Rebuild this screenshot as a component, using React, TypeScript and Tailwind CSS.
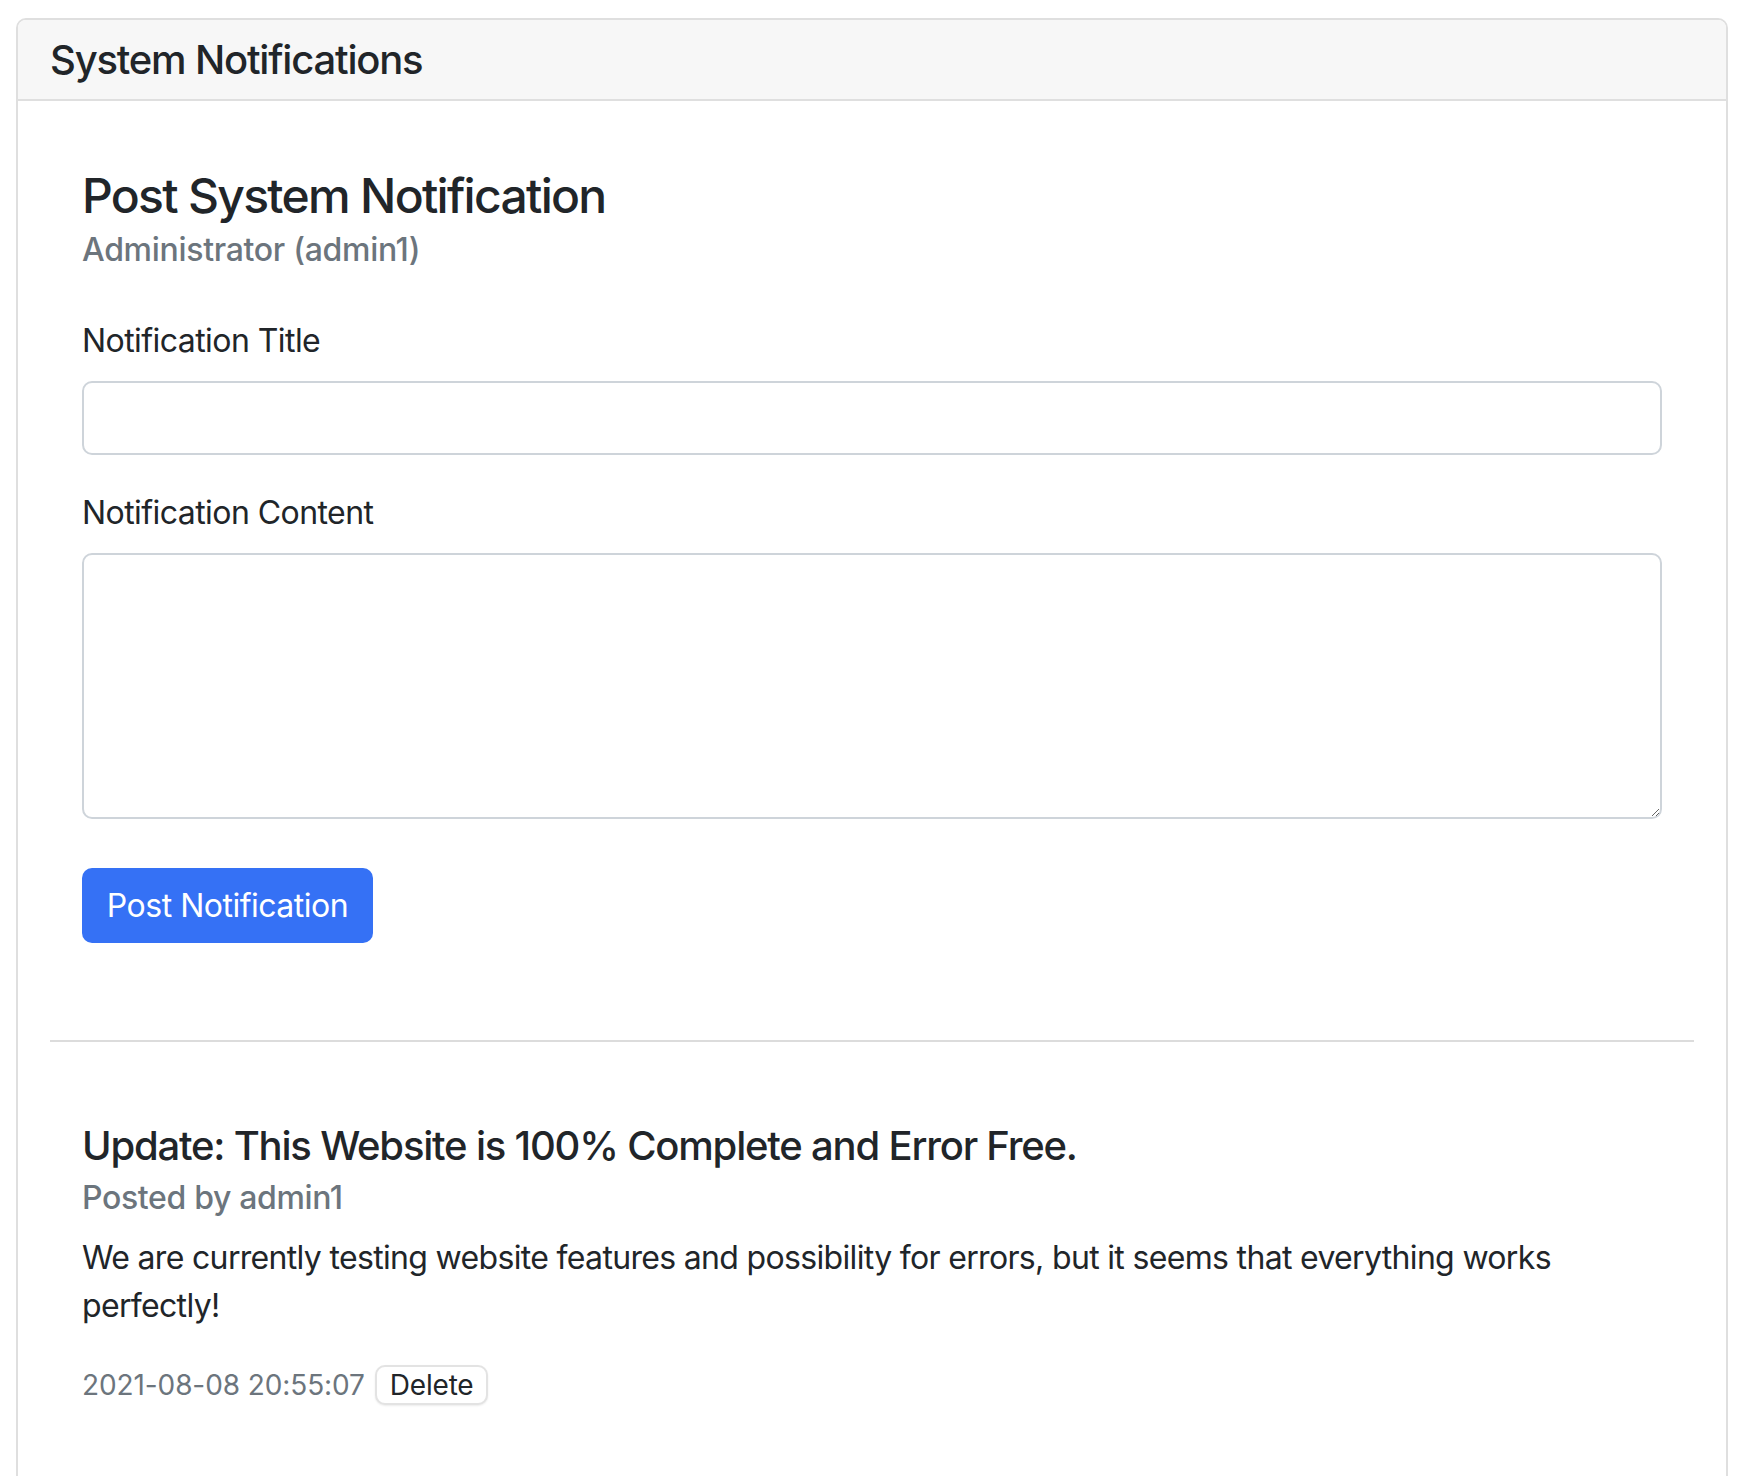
import React from "react";

export default function App() {
  return (
    <div
      className="min-h-screen bg-white pl-[16px] pt-[18px] text-[#212529]"
      style={{ fontFamily: "Inter, 'Noto Sans', 'Liberation Sans', sans-serif" }}
    >
      <div className="w-[1712px] min-h-[1520px] overflow-hidden rounded-[10px] border-2 border-[#dfdfdf] bg-white">
        <div className="h-[81px] border-b-2 border-[#dfdfdf] bg-[#f7f7f7] px-[32px] py-[16px]">
          <h5 className="text-[40px] font-medium leading-[48px] tracking-[-1.2px]">System Notifications</h5>
        </div>
        <div className="px-[32px] pt-[32px]">
          <div className="px-[32px] pt-[34px]">
            <h4 className="text-[48px] font-medium leading-[57.6px] tracking-[-1.7px]">Post System Notification</h4>
            <h6 className="mt-[6px] text-[32px] font-medium leading-[38.4px] tracking-[-0.3px] text-[#6c757d]">
              Administrator (admin1)
            </h6>
            <label className="mt-[48px] block text-[32px] leading-[48px] tracking-[-0.56px]">Notification Title</label>
            <input
              type="text"
              className="mt-[16px] block h-[74px] w-full rounded-[10px] border-2 border-[#ced4da] bg-white px-[24px] text-[32px] outline-none"
            />
            <label className="mt-[34px] block text-[32px] leading-[48px] tracking-[-0.56px]">Notification Content</label>
            <textarea className="mt-[16px] block h-[266px] w-full rounded-[10px] border-2 border-[#ced4da] bg-white px-[24px] py-[12px] text-[32px] outline-none" />
            <button className="mt-[49px] block h-[75px] w-[291px] rounded-[10px] bg-[#3571f5] text-[32px] leading-[48px] tracking-[-0.5px] text-white">
              Post Notification
            </button>
          </div>
          <hr className="mt-[97px] border-0 border-t-2 border-[#dcdcdc]" />
          <div className="px-[32px] pt-[80px]">
            <h5 className="text-[40px] font-medium leading-[48px] tracking-[-1.2px]">
              Update: This Website is 100% Complete and Error Free.
            </h5>
            <h6 className="mt-[9px] text-[32px] font-medium leading-[38.4px] tracking-[-0.35px] text-[#6c757d]">
              Posted by admin1
            </h6>
            <p className="mt-[17px] text-[32px] leading-[48px] tracking-[-0.67px]">
              We are currently testing website features and possibility for errors, but it seems that everything works perfectly!
            </p>
            <div className="mt-[35px] flex items-center gap-[10px]">
              <span className="text-[28px] leading-[40px] tracking-[-0.1px] text-[#6c757d]">2021-08-08 20:55:07</span>
              <button className="h-[40px] rounded-[10px] border-2 border-[#e3e3e3] bg-white px-[13px] text-[28px] leading-[36px] tracking-[-0.2px] text-[#212529] shadow-[0_1px_2px_rgba(0,0,0,0.08)]">
                Delete
              </button>
            </div>
          </div>
        </div>
      </div>
    </div>
  );
}
